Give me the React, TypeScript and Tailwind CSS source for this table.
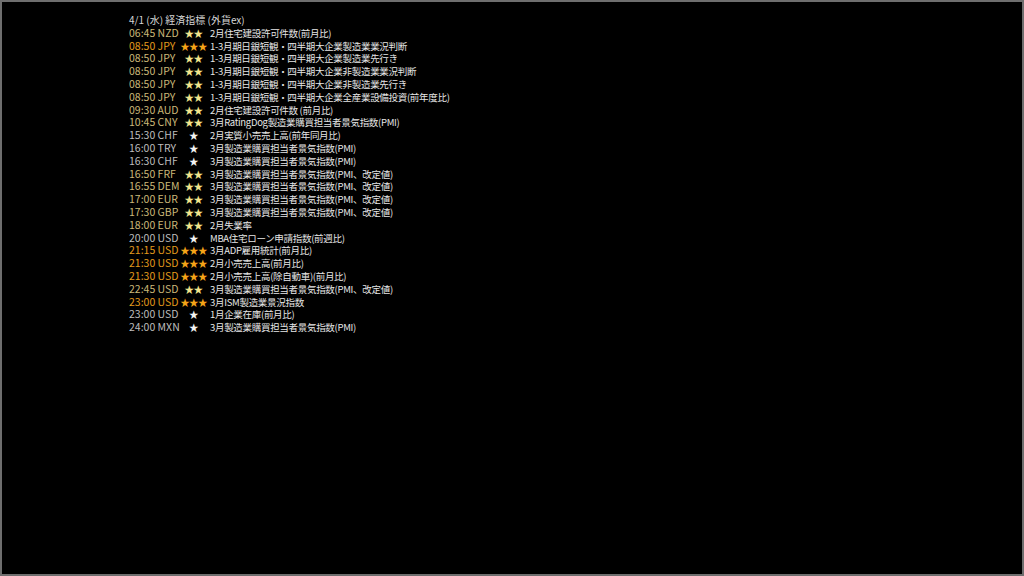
import React from "react";

type Row = { time: string; cur: string; stars: number; text: string };

const rows: Row[] = [
  { time: "06:45", cur: "NZD", stars: 2, text: "2月住宅建設許可件数(前月比)" },
  { time: "08:50", cur: "JPY", stars: 3, text: "1-3月期日銀短観・四半期大企業製造業業況判断" },
  { time: "08:50", cur: "JPY", stars: 2, text: "1-3月期日銀短観・四半期大企業製造業先行き" },
  { time: "08:50", cur: "JPY", stars: 2, text: "1-3月期日銀短観・四半期大企業非製造業業況判断" },
  { time: "08:50", cur: "JPY", stars: 2, text: "1-3月期日銀短観・四半期大企業非製造業先行き" },
  { time: "08:50", cur: "JPY", stars: 2, text: "1-3月期日銀短観・四半期大企業全産業設備投資(前年度比)" },
  { time: "09:30", cur: "AUD", stars: 2, text: "2月住宅建設許可件数 (前月比)" },
  { time: "10:45", cur: "CNY", stars: 2, text: "3月RatingDog製造業購買担当者景気指数(PMI)" },
  { time: "15:30", cur: "CHF", stars: 1, text: "2月実質小売売上高(前年同月比)" },
  { time: "16:00", cur: "TRY", stars: 1, text: "3月製造業購買担当者景気指数(PMI)" },
  { time: "16:30", cur: "CHF", stars: 1, text: "3月製造業購買担当者景気指数(PMI)" },
  { time: "16:50", cur: "FRF", stars: 2, text: "3月製造業購買担当者景気指数(PMI、改定値)" },
  { time: "16:55", cur: "DEM", stars: 2, text: "3月製造業購買担当者景気指数(PMI、改定値)" },
  { time: "17:00", cur: "EUR", stars: 2, text: "3月製造業購買担当者景気指数(PMI、改定値)" },
  { time: "17:30", cur: "GBP", stars: 2, text: "3月製造業購買担当者景気指数(PMI、改定値)" },
  { time: "18:00", cur: "EUR", stars: 2, text: "2月失業率" },
  { time: "20:00", cur: "USD", stars: 1, text: "MBA住宅ローン申請指数(前週比)" },
  { time: "21:15", cur: "USD", stars: 3, text: "3月ADP雇用統計(前月比)" },
  { time: "21:30", cur: "USD", stars: 3, text: "2月小売売上高(前月比)" },
  { time: "21:30", cur: "USD", stars: 3, text: "2月小売売上高(除自動車)(前月比)" },
  { time: "22:45", cur: "USD", stars: 2, text: "3月製造業購買担当者景気指数(PMI、改定値)" },
  { time: "23:00", cur: "USD", stars: 3, text: "3月ISM製造業景況指数" },
  { time: "23:00", cur: "USD", stars: 1, text: "1月企業在庫(前月比)" },
  { time: "24:00", cur: "MXN", stars: 1, text: "3月製造業購買担当者景気指数(PMI)" },
];

// 重要度ごとの色
const timeColor: Record<number, string> = {
  1: "text-[#bdbdbd]",
  2: "text-[#cbb878]",
  3: "text-[#e29a1c]",
};
const starColor: Record<number, string> = {
  1: "text-[#f4f4f4]",
  2: "text-[#f3e48c]",
  3: "text-[#f5a418]",
};

export default function App() {
  return (
    <div
      className="w-[1024px] h-[576px] bg-black border-2 border-[#6e6e6e] overflow-hidden pl-[127px] pt-[12px] leading-[12.8px]"
      style={{ fontFamily: '"Noto Sans CJK JP", "Noto Sans", sans-serif' }}
    >
      <div className="text-[#d6d6d6] h-[12.8px] text-[10px]">4/1 (水) 経済指標 (外貨ex)</div>
      {rows.map((r, i) => (
        <div key={i} className="flex items-center h-[12.8px] whitespace-nowrap">
          <div className={`w-[51px] text-[10.5px] ${timeColor[r.stars]}`}>
            {r.time} {r.cur}
          </div>
          <div className={`w-[30px] pr-[3px] text-center text-[9.5px] tracking-[-0.6px] ${starColor[r.stars]}`}>
            {"★".repeat(r.stars)}
          </div>
          <div className="text-[#e6e6e6] text-[9.5px] tracking-[-0.3px]">{r.text}</div>
        </div>
      ))}
    </div>
  );
}
